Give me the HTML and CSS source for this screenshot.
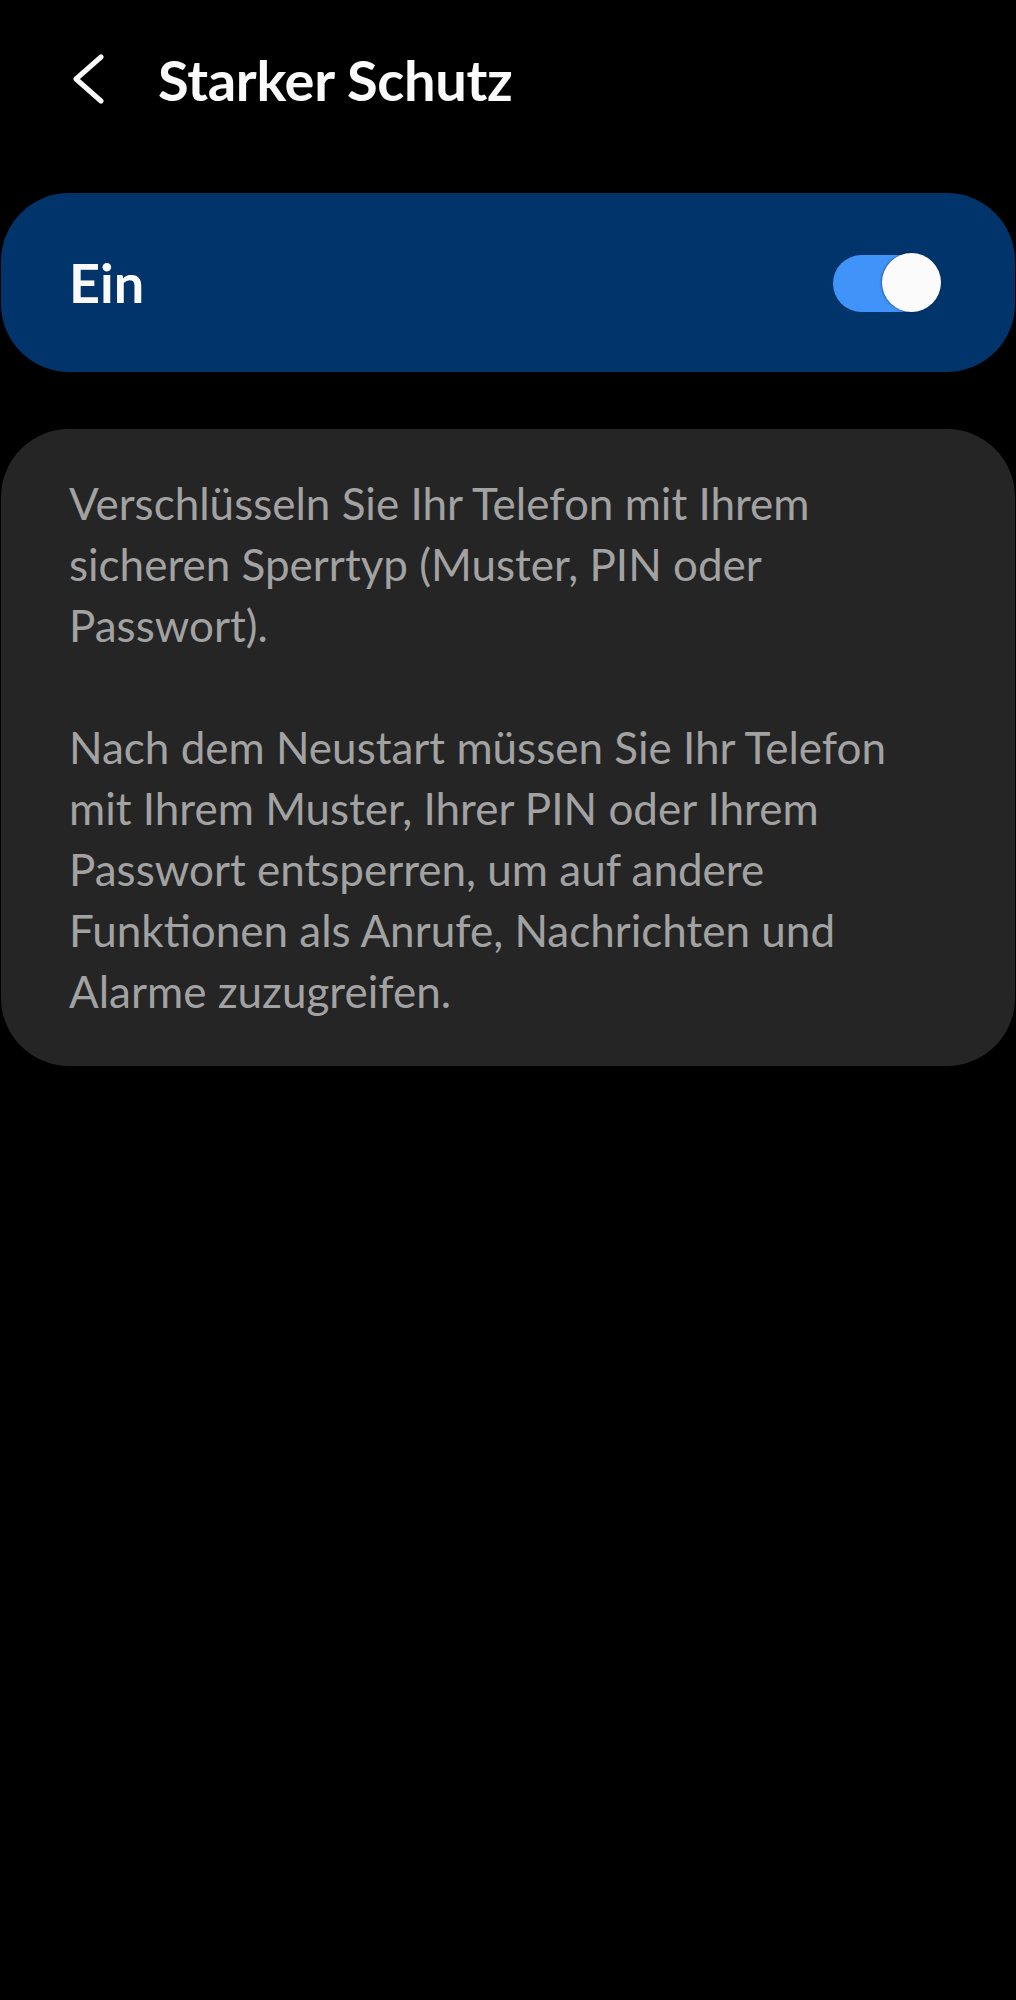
FILE: index.html
```html
<!DOCTYPE html>
<html lang="de">
<head>
<meta charset="utf-8">
<title>Starker Schutz</title>
<link rel="stylesheet" href="styles.css">
</head>
<body>
<div class="screen">
  <header class="appbar">
    <span class="back" aria-label="Zurück">
      <svg width="34" height="50" viewBox="0 0 34 50"><path d="M31 3 L6 25 L31 47" fill="none" stroke="#fafafa" stroke-width="5" stroke-linecap="round" stroke-linejoin="round"/></svg>
    </span>
    <h1 class="title">Starker Schutz</h1>
  </header>
  <section class="switchcard">
    <span class="switchlabel">Ein</span>
    <span class="toggle"><span class="track"></span><span class="thumb"></span></span>
  </section>
  <section class="infocard">
    <p class="infotext">Verschlüsseln Sie Ihr Telefon mit Ihrem sicheren Sperrtyp (Muster, PIN oder Passwort).</p>
    <p class="infotext">Nach dem Neustart müssen Sie Ihr Telefon mit Ihrem Muster, Ihrer PIN oder Ihrem Passwort entsperren, um auf andere Funktionen als Anrufe, Nachrichten und Alarme zuzugreifen.</p>
  </section>
</div>
</body>
</html>
```
FILE: styles.css
```css
html, body { margin: 0; padding: 0; background: #000; }
body { font-family: Lato, "Noto Sans", sans-serif; }
.screen { width: 1016px; min-height: 2000px; background: #000; }
.appbar { display: flex; align-items: center; height: 158px; padding-left: 70px; box-sizing: border-box; }
.back { display: flex; width: 34px; height: 50px; margin-right: 54px; }
.title { margin: 0; color: #fafafa; font-size: 56px; font-weight: 700; line-height: normal; letter-spacing: -0.3px; }
.switchcard { display: flex; align-items: center; justify-content: space-between; margin: 35px 1px 0 1px; height: 179px; border-radius: 68px; background: #00346a; padding: 0 74px 0 68px; }
.switchlabel { color: #fafafa; font-size: 54px; font-weight: 700; line-height: normal; }
.toggle { position: relative; width: 108px; height: 60px; }
.track { position: absolute; left: 0; top: 2px; width: 96px; height: 57px; border-radius: 29px; background: #3f93f9; }
.thumb { position: absolute; right: 0; top: 0; width: 59px; height: 59px; border-radius: 50%; background: #fbfbfb; box-shadow: -1px 0 2px rgba(0,0,0,0.35); }
.infocard { margin: 57px 1px 0 1px; border-radius: 68px; background: #252525; padding: 44px 112px 44px 68px; }
.infotext { margin: 0; color: #a2a2a2; font-size: 44px; line-height: 61px; }
.infotext + .infotext { margin-top: 61px; }
```
